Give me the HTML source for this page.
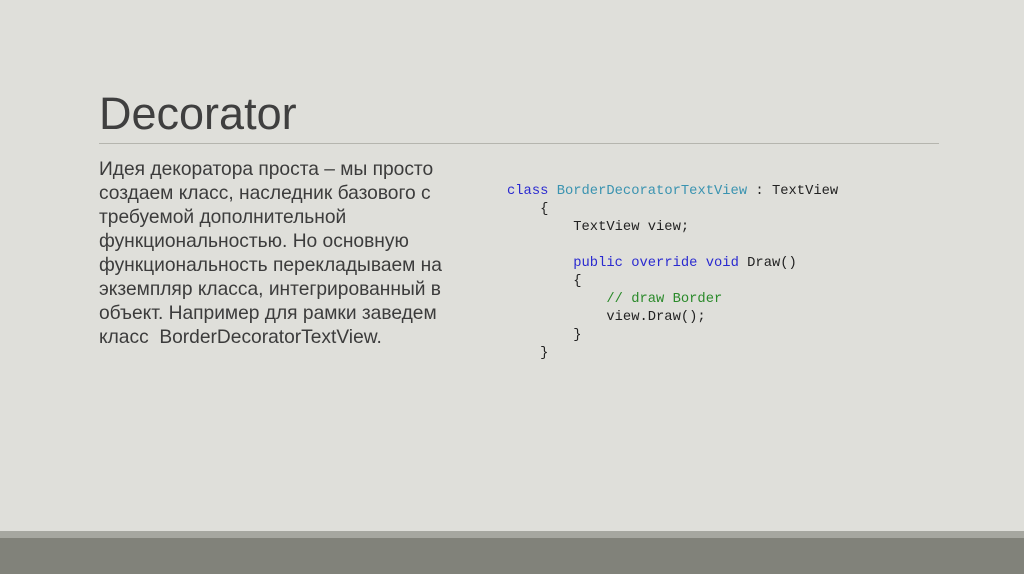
<!DOCTYPE html>
<html><head><meta charset="utf-8"><style>
html,body{margin:0;padding:0}
body{width:1024px;height:574px;background:#dfdfda;position:relative;overflow:hidden;font-family:"Liberation Sans",sans-serif}
.t{position:absolute;left:99px;top:84px;font-size:45px;color:#3f3f3f;line-height:60px}
.hr{position:absolute;left:99px;top:143px;width:840px;height:1px;background:#b5b5ae}
.p{position:absolute;left:99px;top:158px;width:380px;font-size:19.2px;line-height:24px;color:#3c3c3c}
.c{position:absolute;left:507px;top:183px;font-family:"Liberation Mono",monospace;font-size:13.8px;line-height:18px;color:#222;white-space:pre;margin:0}
.k{color:#2a2ad0}.ty{color:#3a93b0}.cm{color:#2a8a2a}
.b1{position:absolute;left:0;top:531px;width:1024px;height:7px;background:#a6a7a0}
.b2{position:absolute;left:0;top:538px;width:1024px;height:36px;background:#81827a}
</style></head><body>
<div class="t">Decorator</div>
<div class="hr"></div>
<div class="p">Идея декоратора проста – мы просто создаем класс, наследник базового с требуемой дополнительной функциональностью. Но основную функциональность перекладываем на экземпляр класса, интегрированный в объект. Например для рамки заведем класс&nbsp; BorderDecoratorTextView.</div>
<pre class="c"><span class="k">class</span> <span class="ty">BorderDecoratorTextView</span> : TextView
    {
        TextView view;

        <span class="k">public</span> <span class="k">override</span> <span class="k">void</span> Draw()
        {
            <span class="cm">// draw Border</span>
            view.Draw();
        }
    }</pre>
<div class="b1"></div><div class="b2"></div>
</body></html>
